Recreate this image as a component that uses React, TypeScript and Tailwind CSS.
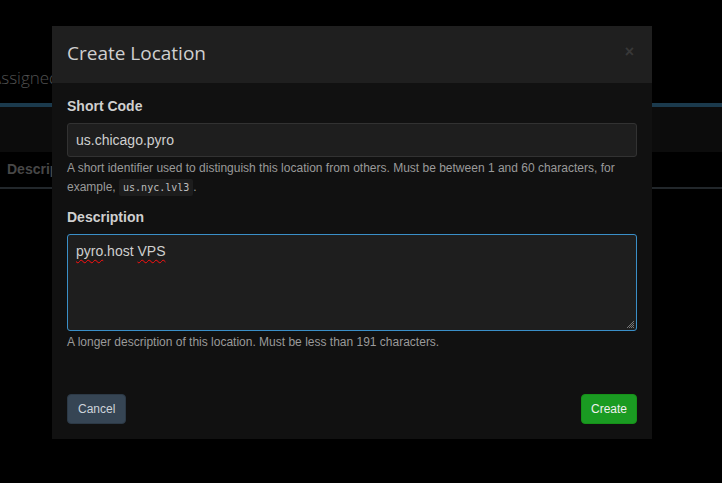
import React from "react";

export default function App() {
  return (
    <div className="relative h-[483px] w-[722px] overflow-hidden bg-black" style={{ fontFamily: '"Liberation Sans", Arial, sans-serif' }}>
      {/* dimmed background page */}
      <div className="pt-[66px]">
        <div className="-ml-[9px] h-[37px] whitespace-nowrap text-[17px] font-light leading-[24px] text-[#505050]" style={{ fontFamily: '"Open Sans", sans-serif' }}>
          Assigned Servers
        </div>
        <div className="h-[4px] bg-[#1b3a4d]" />
        <div className="h-[45px] bg-[#0c0c0c]" />
        <div className="flex h-[35px] items-center pl-[7px] text-[14px] font-bold text-[#474747]">Description</div>
        <div className="h-[2px] bg-[#22272b]" />
      </div>

      {/* modal */}
      <div className="absolute left-[52px] top-[26px] flex h-[413px] w-[600px] flex-col bg-[#111111]">
        <div className="flex h-[57px] items-center justify-between bg-[#1f1f1f] pl-[15px] pr-[18px]">
          <div className="-mt-[2px] text-[19px] text-[#cfcfcf]" style={{ fontFamily: '"Open Sans", sans-serif' }}>
            Create Location
          </div>
          <div className="-mt-[6px] text-[16px] font-bold leading-none text-[#383838]">×</div>
        </div>
        <div className="flex flex-1 flex-col px-[15px] pb-[15px] pt-[13px]">
          <div className="text-[14px] font-bold leading-[20px] text-[#cfcfcf]">Short Code</div>
          <div className="mt-[7px] flex h-[34px] items-center rounded-[3px] border border-[#323232] bg-[#1e1e1e] px-[8px] text-[14px] text-[#cfcfcf]">
            us.chicago.pyro
          </div>
          <div className="mt-[2px] text-[12px] leading-[19px] text-[#9a9a9a]">
            A short identifier used to distinguish this location from others. Must be between 1 and 60 characters, for example,{" "}
            <code className="rounded-[2px] bg-[#1d1d1d] px-[4px] py-[3px] text-[10px] text-[#bdbdbd]" style={{ fontFamily: '"DejaVu Sans Mono", monospace' }}>
              us.nyc.lvl3
            </code>
            .
          </div>
          <div className="mt-[10px] text-[14px] font-bold leading-[20px] text-[#cfcfcf]">Description</div>
          <div className="relative mt-[7px] h-[97px] rounded-[3px] border border-[#3a8fc8] bg-[#1e1e1e] px-[8px] py-[7px] text-[14px] leading-[18px] text-[#cfcfcf]">
            <span className="underline decoration-[#ff1010] decoration-wavy decoration-[1px] underline-offset-[3px]">pyro</span>.host{" "}
            <span className="underline decoration-[#ff1010] decoration-wavy decoration-[1px] underline-offset-[3px]">VPS</span>
            <svg className="absolute bottom-[1px] right-[1px]" width="10" height="10" viewBox="0 0 10 10">
              <path d="M9 2 L2 9 M9 4 L4 9 M9 6 L6 9 M9 8 L8 9" stroke="#777" strokeWidth="1" />
            </svg>
          </div>
          <div className="mt-[2px] text-[12px] leading-[19px] text-[#9a9a9a]">
            A longer description of this location. Must be less than 191 characters.
          </div>
          <div className="mt-auto flex items-center justify-between">
            <button className="h-[30px] rounded-[4px] border border-[#2c3946] bg-[#364554] px-[10px] text-[12px] text-[#cdd3da]">Cancel</button>
            <button className="h-[30px] rounded-[4px] border border-[#169118] bg-[#1a9b22] px-[9px] text-[12px] text-[#f0f0f0]">Create</button>
          </div>
        </div>
      </div>
    </div>
  );
}
